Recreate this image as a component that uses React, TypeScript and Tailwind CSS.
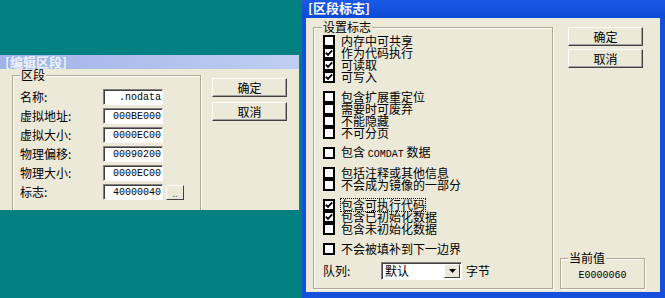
import type { ReactNode } from "react"

const groupBox = "border border-[#aca899] shadow-[inset_1px_1px_0_#ffffff,1px_1px_0_#ffffff]"

function Btn({ children }: { children: ReactNode }) {
  return (
    <div className="w-[75px] h-[19px] flex items-center justify-center bg-[#ece9d8] border border-t-white border-l-white border-r-[#404040] border-b-[#404040] shadow-[inset_-1px_-1px_0_#a0a0a0] text-[12px] leading-[12px] text-black">
      {children}
    </div>
  )
}

function Field({ label, value, more }: { label: string; value: string; more?: boolean }) {
  return (
    <div className="flex items-center h-[16px]">
      <span className="w-[83px] text-[12px] leading-[16px]">{label}</span>
      <div className="w-[60px] h-[16px] bg-white border border-t-[#808080] border-l-[#808080] border-r-white border-b-white shadow-[inset_1px_1px_0_#404040] flex items-center justify-end pr-[1px] font-['Liberation_Mono',monospace] text-[10px]">
        {value}
      </div>
      {more && (
        <div className="ml-[3px] w-[18px] h-[15px] flex items-end justify-center bg-[#ece9d8] border border-t-white border-l-white border-r-[#404040] border-b-[#404040] text-[9px] leading-[10px] text-[#555]">
          ..
        </div>
      )}
    </div>
  )
}

function Check() {
  return (
    <svg width="8" height="8" viewBox="0 0 8 8">
      <path d="M0.8 3.6 L3 5.8 L7.2 1.4" stroke="black" strokeWidth="1.9" fill="none" />
    </svg>
  )
}

function CheckRow({ label, checked, focus }: { label: ReactNode; checked?: boolean; focus?: boolean }) {
  return (
    <div className="flex items-center h-[12px]">
      <span className="w-[12px] h-[12px] shrink-0 border-2 border-black bg-white flex items-center justify-center">
        {checked && <Check />}
      </span>
      <span className={focus ? "ml-[6px] leading-[12px] outline-1 outline-dotted outline-black" : "ml-[6px] leading-[12px]"}>
        {label}
      </span>
    </div>
  )
}

export default function App() {
  return (
    <div className="relative w-[665px] h-[298px] overflow-hidden bg-[#008080] font-['Noto_Sans_CJK_SC','Liberation_Sans',sans-serif] text-black">
      {/* edit section dialog (inactive) */}
      <div className="absolute left-0 top-[55px] w-[299px] h-[155px] flex flex-col">
        <div className="h-[14px] flex items-center bg-linear-to-r from-[#9fb3e8] to-[#c0cef2] pl-[5px] text-[13px] font-bold text-[#eef3ff]">
          [编辑区段]
        </div>
        <div className="flex-1 flex overflow-hidden bg-[#ece9d8]">
          <div className={`relative ml-[12px] mt-[6px] w-[189px] h-[200px] ${groupBox}`}>
            <span className="absolute left-[7px] -top-[8px] px-[1px] bg-[#ece9d8] text-[12px] leading-[14px]">区段</span>
            <div className="flex flex-col gap-[3px] pl-[7px] pt-[13px]">
              <Field label="名称:" value=".nodata" />
              <Field label="虚拟地址:" value="000BE000" />
              <Field label="虚拟大小:" value="0000EC00" />
              <Field label="物理偏移:" value="00090200" />
              <Field label="物理大小:" value="0000EC00" />
              <Field label="标志:" value="40000040" more />
            </div>
          </div>
          <div className="ml-[11px] mt-[9px] flex flex-col gap-[5px]">
            <Btn>确定</Btn>
            <Btn>取消</Btn>
          </div>
        </div>
      </div>

      {/* section flags dialog (active) */}
      <div className="absolute left-[302px] top-0 w-[363px] h-[298px] flex flex-col bg-[#1550dc]">
        <div className="h-[18px] shrink-0 flex items-center bg-linear-to-b from-[#1a5ae6] to-[#0c4ad6] pl-[6px] pb-[2px] text-[13px] font-bold text-white">
          [区段标志]
        </div>
        <div className="flex-1 flex ml-[4px] mr-[5px] mb-[6px] bg-[#ece9d8] text-[12px]">
          <div className={`relative ml-[7px] mt-[9px] w-[240px] h-[262px] ${groupBox}`}>
            <span className="absolute left-[8px] -top-[8px] px-[1px] bg-[#ece9d8] leading-[14px]">设置标志</span>
            <div className="flex flex-col gap-[8px] pl-[9px] pt-[7px]">
              <div className="flex flex-col">
                <CheckRow label="内存中可共享" />
                <CheckRow label="作为代码执行" checked />
                <CheckRow label="可读取" checked />
                <CheckRow label="可写入" checked />
              </div>
              <div className="flex flex-col">
                <CheckRow label="包含扩展重定位" />
                <CheckRow label="需要时可废弃" />
                <CheckRow label="不能隐藏" />
                <CheckRow label="不可分页" />
              </div>
              <CheckRow
                label={
                  <>
                    包含 <span className="font-['Liberation_Mono',monospace] text-[10px]">COMDAT</span> 数据
                  </>
                }
              />
              <div className="flex flex-col">
                <CheckRow label="包括注释或其他信息" />
                <CheckRow label="不会成为镜像的一部分" />
              </div>
              <div className="flex flex-col">
                <CheckRow label="包含可执行代码" checked focus />
                <CheckRow label="包含已初始化数据" checked />
                <CheckRow label="包含未初始化数据" />
              </div>
              <CheckRow label="不会被填补到下一边界" />
            </div>
            <div className="flex items-center h-[18px] mt-[7px] pl-[9px]">
              <span className="w-[58px] leading-[14px]">队列:</span>
              <div className="w-[81px] h-[18px] flex items-center bg-white border border-t-[#808080] border-l-[#808080] border-r-white border-b-white shadow-[inset_1px_1px_0_#404040]">
                <span className="flex-1 ml-[3px] leading-[14px]">默认</span>
                <div className="w-[16px] h-[14px] mr-[1px] flex items-center justify-center bg-[#ece9d8] border border-t-white border-l-white border-r-[#404040] border-b-[#404040]">
                  <svg width="7" height="4" viewBox="0 0 7 4">
                    <path d="M0 0 H7 L3.5 4 Z" fill="black" />
                  </svg>
                </div>
              </div>
              <span className="ml-[4px] leading-[14px]">字节</span>
            </div>
          </div>
          <div className="ml-[7px] mt-[9px] mb-[3px] w-[85px] flex flex-col">
            <div className="ml-[8px] flex flex-col gap-[3px]">
              <Btn>确定</Btn>
              <Btn>取消</Btn>
            </div>
            <div className={`relative mt-auto h-[31px] flex items-center justify-center ${groupBox}`}>
              <span className="absolute left-[7px] -top-[8px] px-[1px] bg-[#ece9d8] leading-[14px]">当前值</span>
              <span className="mt-[4px] font-['Liberation_Mono',monospace] text-[10px]">E0000060</span>
            </div>
          </div>
        </div>
      </div>
    </div>
  )
}
